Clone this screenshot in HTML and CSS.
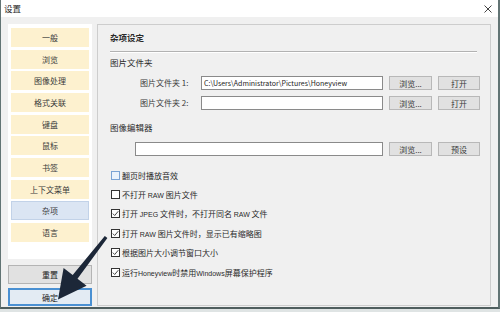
FILE: index.html
```html
<!DOCTYPE html>
<html lang="zh-CN">
<head>
<meta charset="utf-8">
<title>设置</title>
<link rel="stylesheet" href="styles.css">
</head>
<body>
<div class="window">
  <div class="titlebar">
    <span class="title">设置</span>
    <svg class="close" width="8" height="8" viewBox="0 0 8 8"><path d="M0.5 0.5L7.5 7.5M7.5 0.5L0.5 7.5" stroke="#444" stroke-width="1"/></svg>
  </div>
  <div class="content">
    <div class="sidebar">
      <div class="menu">
        <div class="item">一般</div>
        <div class="item">浏览</div>
        <div class="item">图像处理</div>
        <div class="item">格式关联</div>
        <div class="item">键盘</div>
        <div class="item">鼠标</div>
        <div class="item">书签</div>
        <div class="item">上下文菜单</div>
        <div class="item active">杂项</div>
        <div class="item">语言</div>
      </div>
      <div class="side-btn reset">重置</div>
      <div class="side-btn ok">确定</div>
    </div>
    <div class="panel">
      <div class="panel-title">杂项设定</div>
      <div class="rule"></div>
      <div class="section">图片文件夹</div>
      <div class="row row-first">
        <span class="label">图片文件夹 1:</span>
        <div class="input">C:\Users\Administrator\Pictures\Honeyview</div>
        <div class="btn browse">浏览...</div>
        <div class="btn open">打开</div>
      </div>
      <div class="row row-second">
        <span class="label">图片文件夹 2:</span>
        <div class="input"></div>
        <div class="btn browse">浏览...</div>
        <div class="btn open">打开</div>
      </div>
      <div class="section section-editor">图像编辑器</div>
      <div class="row row-editor">
        <div class="input input-wide"></div>
        <div class="btn browse">浏览...</div>
        <div class="btn open">预设</div>
      </div>
      <div class="checklist">
        <div class="check"><span class="box focus"></span><span>翻页时播放音效</span></div>
        <div class="check"><span class="box"></span><span>不打开 <span class="latin">RAW</span> 图片文件</span></div>
        <div class="check"><span class="box"><svg width="7" height="7" viewBox="0 0 7 7"><path d="M0.8 3.6L2.7 5.5L6.3 1.2" fill="none" stroke="#333" stroke-width="0.9"/></svg></span><span>打开 <span class="latin">JPEG</span> 文件时，不打开同名 <span class="latin">RAW</span> 文件</span></div>
        <div class="check"><span class="box"><svg width="7" height="7" viewBox="0 0 7 7"><path d="M0.8 3.6L2.7 5.5L6.3 1.2" fill="none" stroke="#333" stroke-width="0.9"/></svg></span><span>打开 <span class="latin">RAW</span> 图片文件时，显示已有缩略图</span></div>
        <div class="check"><span class="box"><svg width="7" height="7" viewBox="0 0 7 7"><path d="M0.8 3.6L2.7 5.5L6.3 1.2" fill="none" stroke="#333" stroke-width="0.9"/></svg></span><span>根据图片大小调节窗口大小</span></div>
        <div class="check"><span class="box"><svg width="7" height="7" viewBox="0 0 7 7"><path d="M0.8 3.6L2.7 5.5L6.3 1.2" fill="none" stroke="#333" stroke-width="0.9"/></svg></span><span>运行<span class="latin">Honeyview</span>时禁用<span class="latin">Windows</span>屏幕保护程序</span></div>
      </div>
    </div>
  </div>
  <svg class="arrow" width="500" height="312" viewBox="0 0 500 312">
    <polygon points="104.8,236.1 107.4,238.1 77.5,278.7 86.6,285.8 58,299.5 63.6,268 72.7,275.1" fill="#1c2738"/>
  </svg>
</div>
</body>
</html>
```

FILE: styles.css
```css
html, body {
  margin: 0;
  padding: 0;
}

body {
  width: 500px;
  height: 312px;
  overflow: hidden;
  background: #dfe4e4;
  font-family: "Noto Sans CJK SC", "Liberation Sans", sans-serif;
  font-size: 8px;
  color: #2a2a2a;
}

.window {
  position: relative;
  width: 500px;
  height: 309px;
  box-sizing: border-box;
  background: #f0f0f0;
  border-left: 1px solid #627474;
  border-right: 2px solid #627474;
  border-bottom: 2px solid #4f5e5e;
}

.titlebar {
  height: 17px;
  background: #ffffff;
  display: flex;
  align-items: center;
  justify-content: space-between;
  padding: 0 6px 0 3px;
}

.title {
  font-size: 8.5px;
  line-height: 17px;
  color: #222;
}

.close {
  display: block;
}

.content {
  display: flex;
  gap: 5px;
  padding: 7px 0 0 7px;
}

.sidebar {
  width: 84px;
  display: flex;
  flex-direction: column;
}

.menu {
  height: 235px;
  box-sizing: border-box;
  background: #ffffff;
  padding: 4px 3px;
  display: flex;
  flex-direction: column;
  gap: 2.67px;
}

.item {
  height: 19px;
  flex: none;
  background: #fdf1cf;
  display: flex;
  align-items: center;
  justify-content: center;
  color: #3a3a3a;
}

.item.active {
  background: #dbe5f3;
  box-shadow: inset 0 0 0 1px #c2d2e8;
}

.side-btn {
  box-sizing: border-box;
  display: flex;
  align-items: center;
  justify-content: center;
  color: #222;
}

.reset {
  margin-top: 6px;
  height: 19px;
  background: #e1e1e1;
  border: 1px solid #b4b4b4;
}

.ok {
  margin-top: 4px;
  height: 18px;
  background: #e3ebf3;
  border: 2px solid #4a90d2;
}

.panel {
  width: 394px;
  height: 282px;
  box-sizing: border-box;
  border: 1px solid #cdcdcd;
  padding-left: 12px;
}

.panel-title {
  margin-top: 4px;
  line-height: 16px;
  font-size: 8.5px;
  font-weight: bold;
}

.rule {
  margin-top: 6px;
  width: 367px;
  border-top: 1px solid #b2b2b2;
  border-bottom: 1px solid #ffffff;
}

.section {
  margin-top: 2px;
  line-height: 14px;
  font-size: 8.5px;
}

.section-editor {
  margin-top: 10px;
}

.row {
  display: flex;
  height: 14px;
}

.row-first {
  margin-top: 7px;
}

.row-second {
  margin-top: 6px;
}

.row-editor {
  margin-top: 8px;
  padding-left: 25px;
}

.label {
  width: 91px;
  box-sizing: border-box;
  padding-left: 30px;
  line-height: 14px;
  color: #3a3a3a;
}

.input {
  width: 182px;
  box-sizing: border-box;
  background: #ffffff;
  border: 1px solid #8a8a8a;
  padding-left: 2px;
  font-size: 7px;
  line-height: 12px;
  white-space: nowrap;
  overflow: hidden;
  color: #222;
}

.input-wide {
  width: 248px;
}

.btn {
  box-sizing: border-box;
  background: #e1e1e1;
  border: 1px solid #b8b8b8;
  display: flex;
  align-items: center;
  justify-content: center;
  color: #3a3a3a;
}

.browse {
  width: 43px;
  margin-left: 6px;
}

.open {
  width: 42px;
  margin-left: 6px;
}

.checklist {
  margin-top: 9.5px;
  display: flex;
  flex-direction: column;
}

.check {
  height: 19.4px;
  display: flex;
  align-items: center;
  gap: 2px;
  padding-left: 1px;
  color: #2a2a2a;
}

.latin {
  font-family: "Liberation Sans", sans-serif;
  font-size: 7px;
}

.box {
  width: 9px;
  height: 9px;
  box-sizing: border-box;
  border: 1px solid #333;
  background: #ffffff;
  display: flex;
  align-items: center;
  justify-content: center;
}

.box.focus {
  border-color: #7aa3d4;
  background: #eaf2fb;
}

.box svg {
  display: block;
}

.arrow {
  position: absolute;
  left: -1px;
  top: 0;
  pointer-events: none;
}
```
